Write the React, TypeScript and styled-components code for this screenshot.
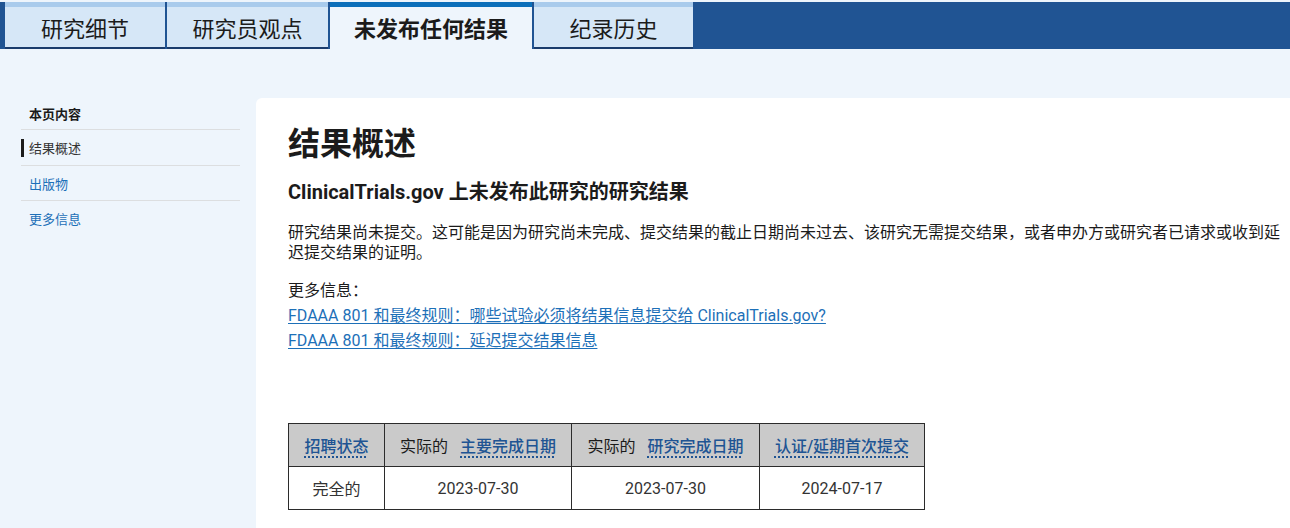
import React from "react";
import styled, { createGlobalStyle } from "styled-components";

const Global = createGlobalStyle`
  html, body { margin: 0; padding: 0; }
  body {
    background: #eef5fc;
    font-family: Roboto, "Noto Sans CJK SC", sans-serif;
    color: #1b1b1b;
  }
  * { box-sizing: border-box; }
`;

const Page = styled.div`
  min-height: 528px;
  display: flex;
  flex-direction: column;
  padding-top: 2px;
`;

const TabBar = styled.nav`
  height: 47px;
  background: #205493;
  display: flex;
  align-items: flex-start;
  gap: 2px;
  padding-left: 5px;
`;

const Tab = styled.div<{ $active?: boolean; $w: number }>`
  width: ${(p) => p.$w}px;
  height: 47px;
  border-top: 5px solid ${(p) => (p.$active ? "#0b6fba" : "#a9cbec")};
  border-bottom: 2px solid ${(p) => (p.$active ? "#eef5fc" : "#1a3c6c")};
  background: ${(p) => (p.$active ? "#eef5fc" : "#d6e7f7")};
  display: flex;
  align-items: center;
  justify-content: center;
  font-size: 22px;
  font-weight: ${(p) => (p.$active ? 700 : 400)};
  color: #1b1b1b;
  white-space: nowrap;
`;

const Body = styled.div`
  flex: 1;
  display: flex;
  padding-top: 49px;
`;

const Sidebar = styled.aside`
  width: 256px;
  flex: none;
  padding: 0 16px 0 21px;
`;

const SideHeading = styled.div`
  height: 32px;
  display: flex;
  align-items: center;
  padding-left: 8px;
  padding-bottom: 1px;
  font-size: 13px;
  font-weight: 700;
  color: #1b1b1b;
  border-bottom: 1px solid #dcdee0;
`;

const SideItem = styled.div<{ $current?: boolean; $divider?: boolean }>`
  height: ${(p) => (p.$current ? 36 : 35)}px;
  display: flex;
  align-items: center;
  font-size: 13px;
  color: ${(p) => (p.$current ? "#333" : "#1d70b8")};
  border-bottom: ${(p) => (p.$divider ? "1px solid #dcdee0" : "none")};
  padding-left: ${(p) => (p.$current ? 0 : 8)}px;
`;

const CurrentMark = styled.span`
  display: flex;
  align-items: center;
  height: 18px;
  border-left: 3px solid #1b1b1b;
  padding-left: 5px;
`;

const Panel = styled.main`
  flex: 1;
  background: #ffffff;
  border-top-left-radius: 6px;
  padding: 24px 6px 20px 32px;
`;

const Title = styled.h1`
  margin: 0;
  font-size: 32px;
  line-height: 44px;
  font-weight: 700;
  color: #1b1b1b;
`;

const Subtitle = styled.h2`
  margin: 12px 0 0;
  font-size: 20px;
  line-height: 28px;
  font-weight: 700;
  color: #1b1b1b;
`;

const Para = styled.p`
  margin: 17px 0 0;
  font-size: 16px;
  line-height: 20px;
  color: #1b1b1b;
`;

const MoreInfo = styled.div`
  margin-top: 15px;
  font-size: 16px;
  line-height: 25px;
  color: #1b1b1b;
  display: flex;
  flex-direction: column;
  align-items: flex-start;
`;

const Link = styled.a`
  color: #1d70b8;
  text-decoration: underline;
  text-underline-offset: 2px;
  cursor: pointer;
`;

const Table = styled.table`
  margin-top: 70px;
  border-collapse: collapse;
  font-size: 16px;
`;

const Th = styled.th<{ $w: number }>`
  width: ${(p) => p.$w}px;
  height: 43px;
  background: #cacaca;
  border: 1px solid #2b2b2b;
  font-weight: 400;
  color: #1b1b1b;
  text-align: center;
  padding: 0 8px;
  white-space: nowrap;
`;

const Td = styled.td`
  height: 43px;
  border: 1px solid #2b2b2b;
  text-align: center;
  color: #333;
  padding: 0 8px;
`;

const Term = styled.span<{ $gap?: boolean }>`
  color: #205493;
  font-weight: 500;
  text-decoration: underline dotted;
  text-decoration-thickness: 2px;
  text-underline-offset: 4px;
  margin-left: ${(p) => (p.$gap ? 12 : 0)}px;
`;

const tabs = [
  { label: "研究细节", w: 160 },
  { label: "研究员观点", w: 161 },
  { label: "未发布任何结果", w: 202, active: true },
  { label: "纪录历史", w: 159 },
];

export default function App() {
  return (
    <>
      <Global />
      <Page>
        <TabBar>
          {tabs.map((t) => (
            <Tab key={t.label} $w={t.w} $active={t.active}>
              {t.label}
            </Tab>
          ))}
        </TabBar>
        <Body>
          <Sidebar>
            <SideHeading>本页内容</SideHeading>
            <SideItem $current $divider>
              <CurrentMark>结果概述</CurrentMark>
            </SideItem>
            <SideItem $divider>出版物</SideItem>
            <SideItem>更多信息</SideItem>
          </Sidebar>
          <Panel>
            <Title>结果概述</Title>
            <Subtitle>ClinicalTrials.gov 上未发布此研究的研究结果</Subtitle>
            <Para>
              研究结果尚未提交。这可能是因为研究尚未完成、提交结果的截止日期尚未过去、该研究无需提交结果，或者申办方或研究者已请求或收到延迟提交结果的证明。
            </Para>
            <MoreInfo>
              <span>更多信息：</span>
              <Link>FDAAA 801 和最终规则：哪些试验必须将结果信息提交给 ClinicalTrials.gov? </Link>
              <Link>FDAAA 801 和最终规则：延迟提交结果信息</Link>
            </MoreInfo>
            <Table>
              <thead>
                <tr>
                  <Th $w={96}>
                    <Term>招聘状态</Term>
                  </Th>
                  <Th $w={187}>
                    实际的<Term $gap>主要完成日期</Term>
                  </Th>
                  <Th $w={188}>
                    实际的<Term $gap>研究完成日期</Term>
                  </Th>
                  <Th $w={165}>
                    <Term>认证/延期首次提交</Term>
                  </Th>
                </tr>
              </thead>
              <tbody>
                <tr>
                  <Td>完全的</Td>
                  <Td>2023-07-30</Td>
                  <Td>2023-07-30</Td>
                  <Td>2024-07-17</Td>
                </tr>
              </tbody>
            </Table>
          </Panel>
        </Body>
      </Page>
    </>
  );
}
